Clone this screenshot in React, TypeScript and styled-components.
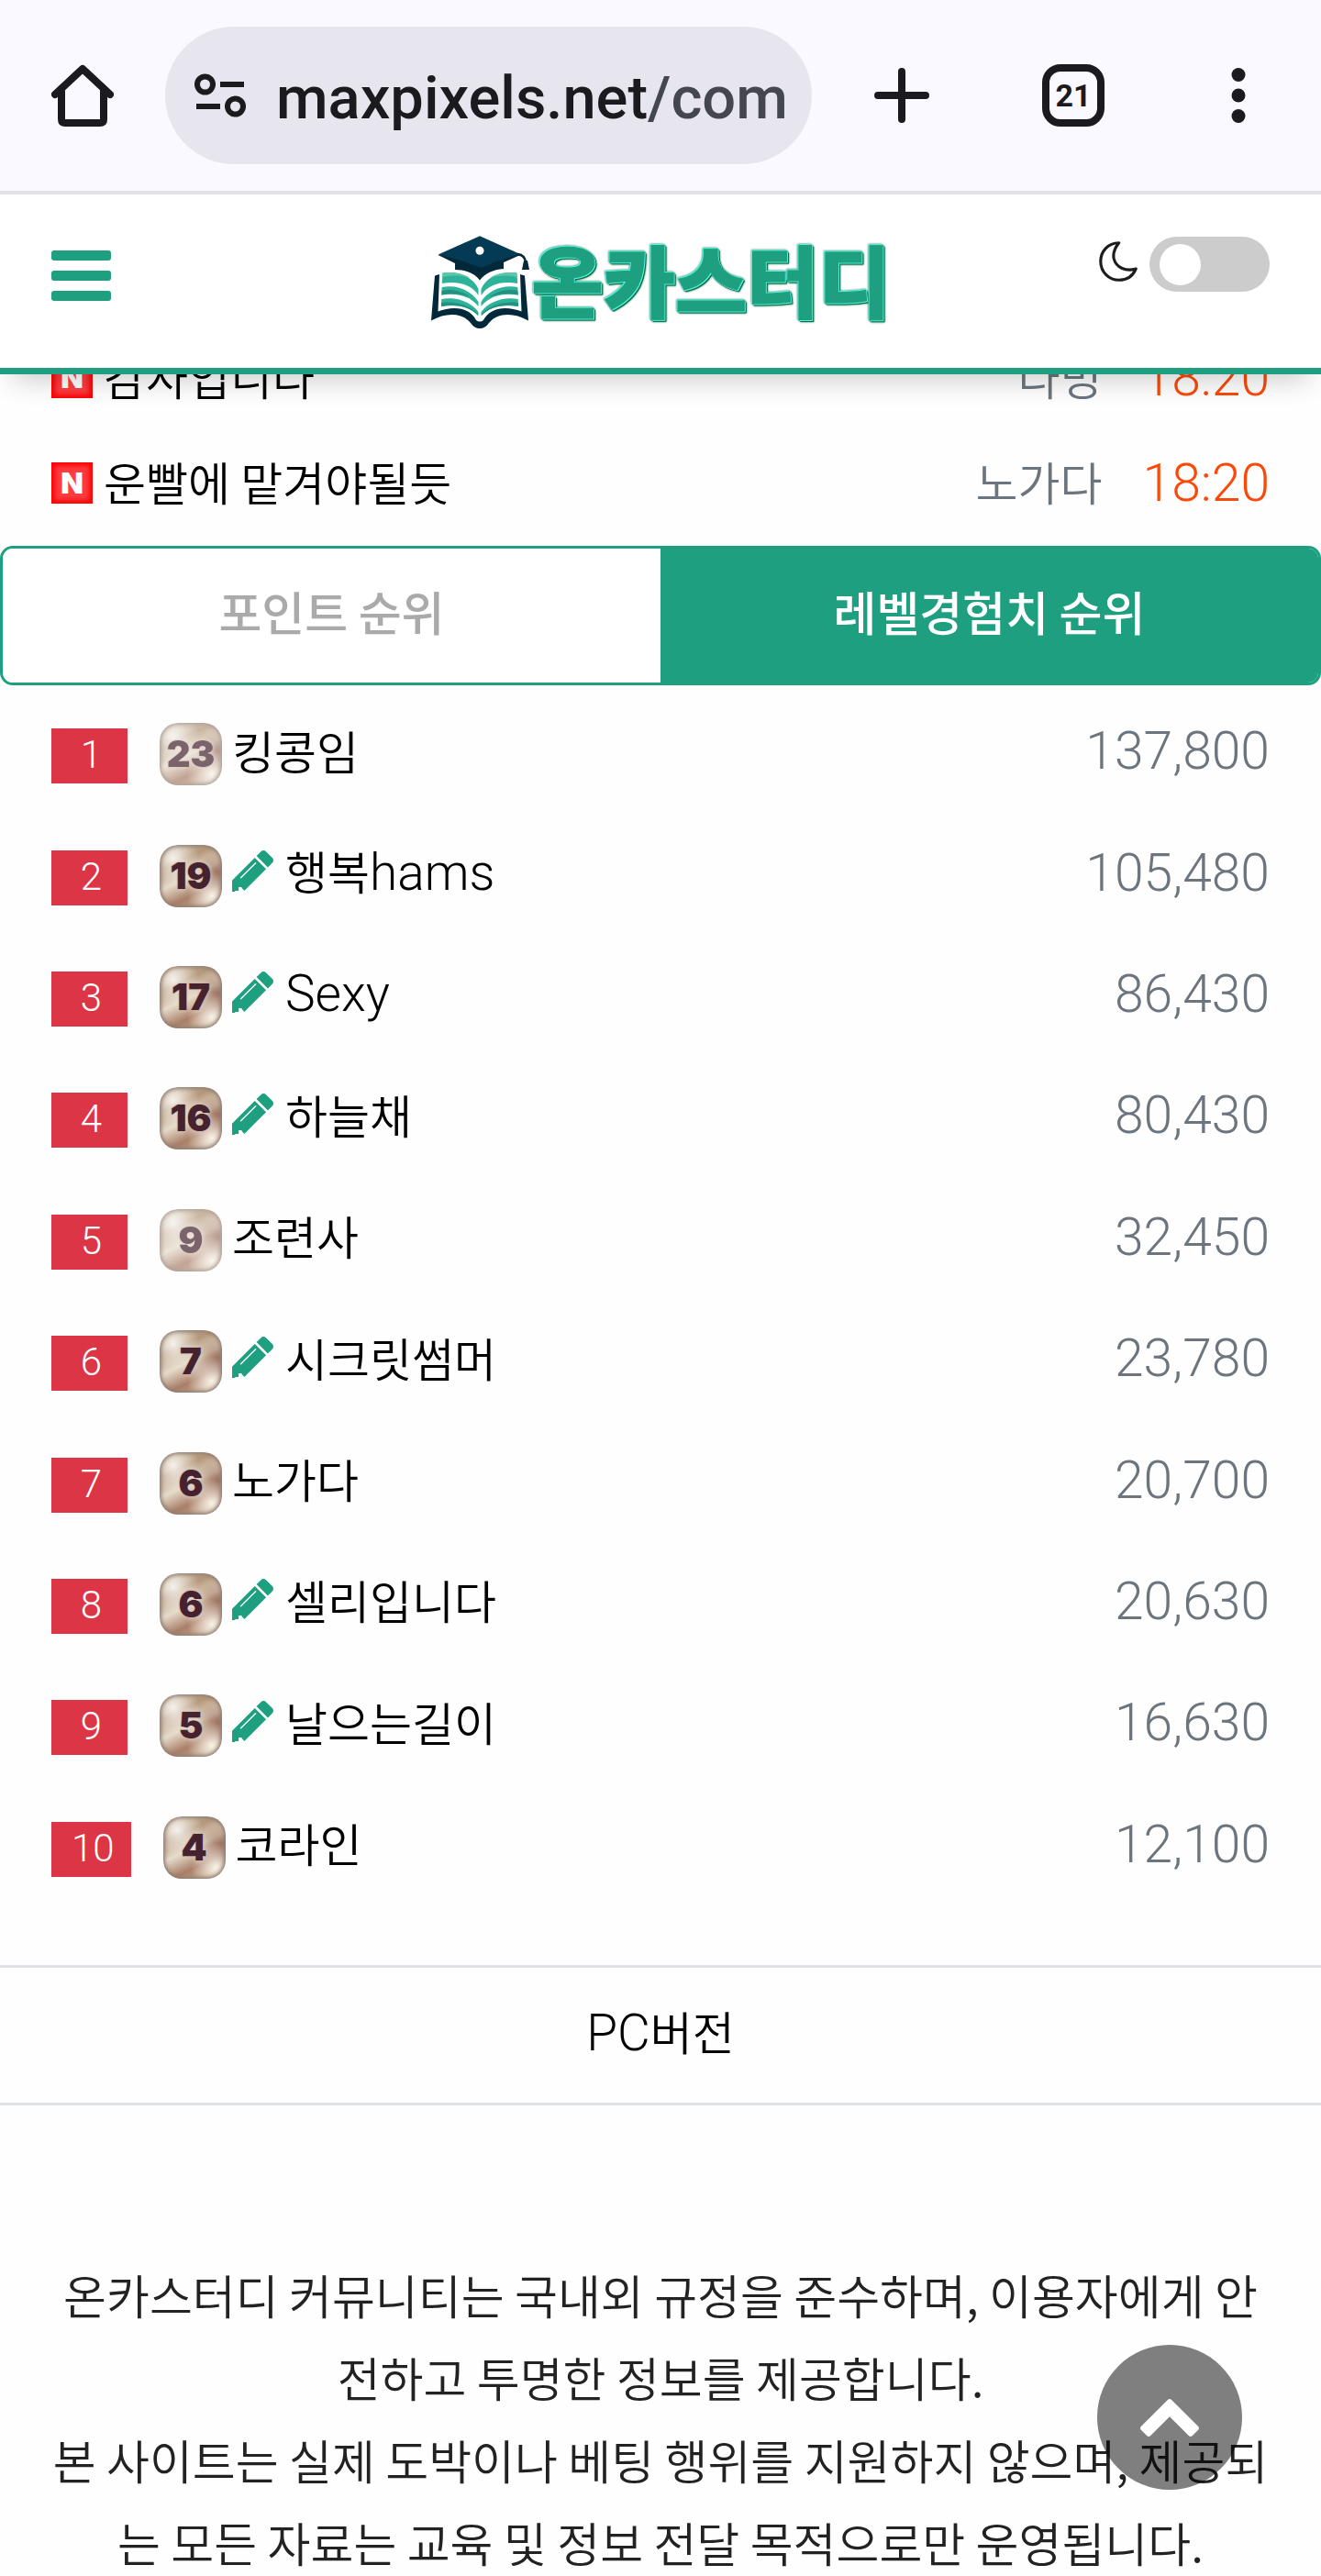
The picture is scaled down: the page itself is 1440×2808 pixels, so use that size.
import React from "react";
import styled, { createGlobalStyle } from "styled-components";

const GREEN = "#1d9f80";
const KR = '"Noto Sans CJK KR", sans-serif';
const LATIN = 'Roboto, "Noto Sans CJK KR", sans-serif';

const GlobalStyle = createGlobalStyle`
  *, *::before, *::after { box-sizing: border-box; }
  body { margin: 0; background: #fefefe; font-family: ${KR}; font-size: 50px; font-weight: 350; color: #000; }
  button { border: 0; padding: 0; margin: 0; background: none; font: inherit; color: inherit; cursor: pointer; }
  a { color: inherit; text-decoration: none; }
  ul, ol, p { margin: 0; padding: 0; list-style: none; }
  svg { display: block; }
`;

const Screen = styled.div`
  display: flex;
  flex-direction: column;
  height: 100vh;
  overflow: hidden;
`;

/* browser bar */

const BrowserBar = styled.div`
  flex: none;
  display: grid;
  grid-template-columns: 180px minmax(0, 1fr) 196px 178px 181px;
  align-items: center;
  height: 212px;
  background: #f9f9ff;
  border-bottom: 4px solid #e1e2e8;
`;

const BarButton = styled.button`
  display: flex;
  align-items: center;
  justify-content: center;
  height: 150px;
  color: #1b1b1f;
`;

const AddressBox = styled.button`
  display: flex;
  align-items: center;
  gap: 33px;
  height: 150px;
  padding: 0 30px 0 32px;
  border-radius: 75px;
  background: #e7e6ee;
  color: #1b1b1f;
  text-align: left;
`;

const Address = styled.span`
  flex: 1;
  min-width: 0;
  padding-top: 5px;
  overflow: hidden;
  white-space: nowrap;
  font: 500 65px/90px ${LATIN};
`;

const AddressPath = styled.span`
  color: #44474f;
`;

const TabCount = styled.span`
  display: flex;
  align-items: center;
  justify-content: center;
  width: 68px;
  height: 68px;
  border: 8px solid #1b1b1f;
  border-radius: 20px;
  font: 700 34px/40px ${LATIN};
`;

/* site header */

const SiteHeader = styled.header`
  flex: none;
  position: relative;
  z-index: 2;
  display: grid;
  grid-template-columns: 1fr auto 1fr;
  align-items: center;
  height: 196px;
  padding: 0 56px;
  background: #fff;
  border-bottom: 7px solid ${GREEN};
  box-shadow: 0 20px 28px -14px rgba(0, 0, 0, 0.2);
`;

const MenuButton = styled.button`
  display: flex;
  flex-direction: column;
  gap: 11px;
  width: 65px;
  padding-bottom: 12px;
`;

const MenuLine = styled.span`
  height: 11px;
  border-radius: 3px;
  background: ${GREEN};
`;

const Brand = styled.a`
  display: flex;
  align-items: center;
`;

const BrandName = styled.span`
  padding-bottom: 7px;
  font: 900 85px/104px ${KR};
  color: ${GREEN};
  -webkit-text-stroke: 1px ${GREEN};
  filter: drop-shadow(1px 1px 0 #4ff5da) drop-shadow(-1px -1px 0 #4ff5da) drop-shadow(1px 1px 0 #0c6b45)
    drop-shadow(0 0 1px #0c6b45);
`;

const ThemeLabel = styled.label`
  justify-self: end;
  display: flex;
  align-items: center;
  gap: 13px;
  padding-bottom: 37px;
`;

const MoonBox = styled.span`
  padding-bottom: 6px;
`;

const ThemeSwitch = styled.input`
  appearance: none;
  display: flex;
  align-items: center;
  width: 131px;
  height: 60px;
  margin: 0;
  padding: 0 11px;
  border-radius: 30px;
  background: #ccc;
  &::before {
    content: "";
    width: 45px;
    height: 45px;
    border-radius: 50%;
    background: #fff;
  }
  &:checked {
    justify-content: flex-end;
    background: ${GREEN};
  }
`;

/* content */

const Content = styled.main`
  flex: 1;
  min-height: 0;
  overflow: hidden;
`;

const LatestList = styled.ul`
  margin-top: -54px;
  padding: 0 56px;
`;

const LatestRow = styled.li`
  display: flex;
  align-items: center;
  height: 115px;
`;

const NewMark = styled.span`
  display: flex;
  align-items: center;
  justify-content: center;
  width: 45px;
  height: 45px;
  margin-right: 12px;
  background: #ff3c40;
  box-shadow: inset 0 0 5px 4px #f80606;
  color: #fff;
  font: 900 32px/45px Inter, sans-serif;
`;

const LatestTitle = styled.a`
  flex: 1;
  padding-bottom: 5px;
  line-height: 72px;
`;

const Author = styled.span`
  margin-right: 44px;
  padding-bottom: 5px;
  line-height: 72px;
  color: #6c757d;
`;

const Time = styled.time`
  font: 350 57px/72px ${LATIN};
  color: #fa4a0a;
`;

const Tabs = styled.div`
  display: grid;
  grid-template-columns: 1fr 1fr;
  height: 152px;
  margin-top: 11px;
  border: 3px solid ${GREEN};
  border-radius: 14px;
  overflow: hidden;
`;

const Tab = styled.button<{ $active?: boolean }>`
  padding-bottom: 10px;
  background: ${(p) => (p.$active ? GREEN : "#fff")};
  color: ${(p) => (p.$active ? "#fff" : "#aaa")};
  font: 500 51px/72px ${KR};
`;

const RankList = styled.ol`
  display: grid;
  grid-auto-rows: 1fr;
  min-height: 1395px;
  padding: 11px 56px 60px;
`;

const RankRow = styled.li`
  display: flex;
  align-items: center;
`;

const RankNumber = styled.span`
  min-width: 83px;
  height: 60px;
  margin-right: 35px;
  padding: 0 18px 0 22px;
  background: #dc3545;
  color: #fff;
  text-align: center;
  font: 350 42px/57px ${LATIN};
`;

const LevelBadge = styled.span<{ $faded?: boolean }>`
  display: flex;
  align-items: center;
  justify-content: center;
  width: 68px;
  height: 68px;
  margin: 0 11px 4px 0;
  border-radius: 20px;
  background:
    radial-gradient(circle at 22% 22%, rgba(255, 255, 255, 0.85), transparent 38%),
    radial-gradient(circle at 84% 82%, rgba(255, 252, 244, 0.9), transparent 34%),
    radial-gradient(circle at 94% 48%, #9a6d5a, transparent 34%),
    linear-gradient(155deg, #d8c9a8 0%, #b5977a 28%, #e6dccb 50%, #a97e68 72%, #d6c39c 100%);
  box-shadow: inset 0 0 4px 2px #8f7c72;
  color: #45222e;
  font: 900 40px/68px Inter, sans-serif;
  text-shadow: 0 0 4px #f3e6d8, 0 0 2px #6d4a50;
  opacity: ${(p) => (p.$faded ? 0.7 : 1)};
`;

const MemberName = styled.a`
  flex: 1;
  line-height: 72px;
  padding-bottom: 15px;
`;

const Latin = styled.span`
  font-family: ${LATIN};
  font-size: 55px;
`;

const PencilBox = styled.span`
  margin-right: 13px;
  padding-bottom: 14px;
`;

const Score = styled.span`
  padding-bottom: 10px;
  font: 350 57px/72px ${LATIN};
  color: #6c757d;
`;

const PcLink = styled.a`
  display: block;
  border: solid #dee2e6;
  border-width: 3px 0;
  padding: 32px 0 40px;
  text-align: center;
  line-height: 72px;
`;

const Notice = styled.footer`
  padding: 161px 56px 40px;
  color: #222;
  text-align: center;
  font-size: 51px;
  line-height: 90px;
`;

const TopButton = styled.button`
  position: fixed;
  right: 86px;
  bottom: 94px;
  display: flex;
  align-items: center;
  justify-content: center;
  width: 158px;
  height: 158px;
  border-radius: 50%;
  background: rgba(0, 0, 0, 0.5);
`;

/* drawings */

const HomeIcon = () => (
  <svg width="68" height="68" viewBox="0 0 68 68" fill="none" stroke="currentColor" strokeWidth="8" strokeLinecap="round" strokeLinejoin="round">
    <path d="M4 33 34 5l30 28" />
    <path d="M11 28v32q0 4 4 4h38q4 0 4-4V28" />
  </svg>
);

const TuneIcon = () => (
  <svg width="56" height="48" viewBox="0 0 56 48" fill="none" stroke="currentColor" strokeWidth="6">
    <circle cx="11.500" cy="12" r="8.500" />
    <path d="M28 12h26M2 36h26" />
    <circle cx="44.500" cy="36" r="8.500" />
  </svg>
);

const PlusIcon = () => (
  <svg width="60" height="60" viewBox="0 0 60 60" stroke="currentColor" strokeWidth="8" strokeLinecap="round">
    <path d="M30 4v52M4 30h52" />
  </svg>
);

const DotsIcon = () => (
  <svg width="16" height="60" viewBox="0 0 16 60" fill="currentColor">
    <circle cx="8" cy="7.500" r="7.500" />
    <circle cx="8" cy="30" r="7.500" />
    <circle cx="8" cy="52.500" r="7.500" />
  </svg>
);

const MoonIcon = () => (
  <svg width="42" height="44" viewBox="0 0 120 126" fill="none" stroke="#1c1c1c" strokeWidth="9" strokeLinejoin="round">
    <path d="M62 5C27 5 5 32 5 63c0 34 27 58 57 58 25 0 44-14 53-35-30 9-62-2-69-33-3-17 3-32 16-48z" />
  </svg>
);

const PencilIcon = () => (
  <svg width="45" height="45" viewBox="0 -1387 1515 1515" fill={GREEN}>
    <path
      transform="scale(1 -1)"
      fillRule="evenodd"
      d="M363 0l91 -91l-235 -235l-107 107v128h128v128h107zM886 928q0 22 -22 22q-10 0 -17 -7l-542 -542q-7 -7 -7 -17q0 -22 22 -22q10 0 17 7l542 542q7 7 7 17zM832 1120l416 -416l-832 -832h-416v416zM1515 1024q0 -53 -37 -90l-166 -166l-416 416l166 165q36 38 90 38q53 0 91 -38l235 -234q37 -39 37 -91z"
    />
  </svg>
);

const ChevronUpIcon = () => (
  <svg width="64" height="41" viewBox="90 -1056 1612 1035" fill="#fff">
    <path
      transform="scale(1 -1)"
      d="M1683 205l-166 -165q-19 -19 -45 -19t-45 19l-531 531l-531 -531q-19 -19 -45 -19t-45 19l-166 165q-19 19 -19 45.500t19 45.500l742 741q19 19 45 19t45 -19l742 -741q19 -19 19 -45.500t-19 -45.500z"
    />
  </svg>
);

const PageBands = () => (
  <>
    <path fill="#2db399" d="M13.600 42.500C31 40 47 47 52.500 60v7C45 55 30 51 12.800 54z" />
    <path fill="#5cc6a8" d="M13.600 42.500C27 41 37 44 43 48 33 45 24 45 13.300 47z" />
    <path fill="#2db399" d="M12.700 58C30 55 45 62 52.500 74v5C43 67 28 64 12.300 66.500z" />
    <path fill="#24907f" d="M12.500 62C24 59 36 63 44 69 34 65 24 64 12.300 66.500z" />
    <path fill="#2db399" d="M12.300 71C30 68 45 75 52.500 85v4C43 79 28 76 12 79z" />
    <path fill="#24907f" d="M12.200 75C28 73 43 78 52 87v2C43 79 28 76 12 79z" />
  </>
);

const StudyLogo = () => (
  <svg width="110" height="104" viewBox="0 0 110 104">
    <path fill="#02283a" d="M5 45.500 10 44 8.500 84.500C25 78 43 80 50 94q4 3 8 0c7-14 25-16 41.500-9.500L98 44l5 1.500 4 49C90 85 73 86 64 97q-4 6-10 6t-10-6C35 86 18 85 1 94.500z" />
    <PageBands />
    <g transform="matrix(-1 0 0 1 108 0)">
      <PageBands />
    </g>
    <path fill="#02283a" d="M8.600 23 27 32v7c12 0 21 4 27 11.500C60 43 68 39 80 38v-7l18-8-44-10z" />
    <path fill="#053a54" d="M54 2.300 98 22 72 30 56 37 30 28 8.600 22.500z" />
    <path fill="none" stroke="#02283a" strokeWidth="2.500" d="M95 22q9 1 9 10" />
    <path fill="#02283a" d="M102 29h4l2 10h-8z" />
    <circle cx="54" cy="18.300" r="4.500" fill="#fff" />
  </svg>
);

/* data */

const latest = [
  { title: "감사입니다", author: "다밍", time: "18:20" },
  { title: "운빨에 맡겨야될듯", author: "노가다", time: "18:20" },
];

const members = [
  { level: 23, name: "킹콩임", score: "137,800", faded: true },
  { level: 19, name: "행복", latin: "hams", score: "105,480", writer: true },
  { level: 17, name: "", latin: "Sexy", score: "86,430", writer: true },
  { level: 16, name: "하늘채", score: "80,430", writer: true },
  { level: 9, name: "조련사", score: "32,450", faded: true },
  { level: 7, name: "시크릿썸머", score: "23,780", writer: true },
  { level: 6, name: "노가다", score: "20,700" },
  { level: 6, name: "셀리입니다", score: "20,630", writer: true },
  { level: 5, name: "날으는길이", score: "16,630", writer: true },
  { level: 4, name: "코라인", score: "12,100" },
];

export default function App() {
  return (
    <Screen>
      <GlobalStyle />
      <BrowserBar>
        <BarButton aria-label="홈">
          <HomeIcon />
        </BarButton>
        <AddressBox>
          <TuneIcon />
          <Address>
            maxpixels.net<AddressPath>/com</AddressPath>
          </Address>
        </AddressBox>
        <BarButton aria-label="새 탭">
          <PlusIcon />
        </BarButton>
        <BarButton>
          <TabCount>21</TabCount>
        </BarButton>
        <BarButton aria-label="더보기">
          <DotsIcon />
        </BarButton>
      </BrowserBar>

      <SiteHeader>
        <MenuButton aria-label="메뉴">
          <MenuLine />
          <MenuLine />
          <MenuLine />
        </MenuButton>
        <Brand href="#">
          <StudyLogo />
          <BrandName>온카스터디</BrandName>
        </Brand>
        <ThemeLabel>
          <MoonBox>
            <MoonIcon />
          </MoonBox>
          <ThemeSwitch type="checkbox" aria-label="다크 모드" />
        </ThemeLabel>
      </SiteHeader>

      <Content>
        <LatestList>
          {latest.map((item) => (
            <LatestRow key={item.title}>
              <NewMark>N</NewMark>
              <LatestTitle href="#">{item.title}</LatestTitle>
              <Author>{item.author}</Author>
              <Time>{item.time}</Time>
            </LatestRow>
          ))}
        </LatestList>

        <Tabs role="tablist">
          <Tab role="tab" aria-selected="false">포인트 순위</Tab>
          <Tab role="tab" aria-selected="true" $active>레벨경험치 순위</Tab>
        </Tabs>

        <RankList>
          {members.map((m, i) => (
            <RankRow key={m.score}>
              <RankNumber>{i + 1}</RankNumber>
              <LevelBadge $faded={m.faded}>{m.level}</LevelBadge>
              {m.writer && (
                <PencilBox>
                  <PencilIcon />
                </PencilBox>
              )}
              <MemberName href="#">
                {m.name}
                {m.latin && <Latin>{m.latin}</Latin>}
              </MemberName>
              <Score>{m.score}</Score>
            </RankRow>
          ))}
        </RankList>

        <PcLink href="#">
          <Latin>PC</Latin>버전
        </PcLink>

        <Notice>
          <p>온카스터디 커뮤니티는 국내외 규정을 준수하며, 이용자에게 안전하고 투명한 정보를 제공합니다.</p>
          <p>본 사이트는 실제 도박이나 베팅 행위를 지원하지 않으며, 제공되는 모든 자료는 교육 및 정보 전달 목적으로만 운영됩니다.</p>
        </Notice>
      </Content>

      <TopButton aria-label="맨 위로">
        <ChevronUpIcon />
      </TopButton>
    </Screen>
  );
}
